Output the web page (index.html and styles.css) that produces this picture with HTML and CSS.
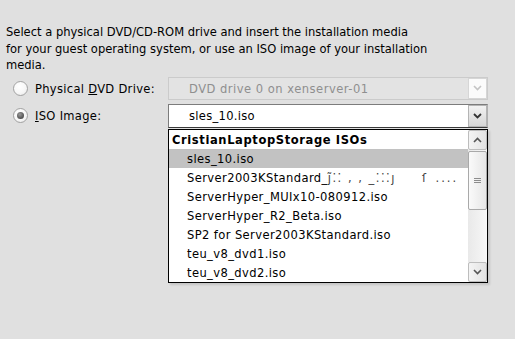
FILE: index.html
```html
<!DOCTYPE html>
<html>
<head>
<meta charset="utf-8">
<link rel="stylesheet" href="styles.css">
</head>
<body>
<div class="page">
  <p class="intro">Select a physical DVD/CD-ROM drive and insert the installation media<br>for your guest operating system, or use an ISO image of your installation<br>media.</p>
  <div class="choices">
    <label class="option">
      <span class="radio"></span>
      <span>Physical <u>D</u>VD Drive:</span>
    </label>
    <div class="combo disabled">
      <span class="combo-text">DVD drive 0 on xenserver-01</span>
      <span class="combo-btn">
        <svg width="9" height="6" viewBox="0 0 9 6"><polyline points="1,1 4.5,4.5 8,1" fill="none" stroke="#c4c4c4" stroke-width="1.6"/></svg>
      </span>
    </div>
    <label class="option">
      <span class="radio checked"></span>
      <span><u>I</u>SO Image:</span>
    </label>
    <div class="combo active">
      <span class="combo-text">sles_10.iso</span>
      <span class="combo-btn">
        <svg width="9" height="6" viewBox="0 0 9 6"><polyline points="1,1 4.5,4.5 8,1" fill="none" stroke="#333" stroke-width="1.8"/></svg>
      </span>
      <div class="droplist">
        <ul class="items">
          <li class="group">CristianLaptopStorage ISOs</li>
          <li class="selected">sles_10.iso</li>
          <li>Server2003KStandard_<span class="garble">ȷ̃⁚⁚ , , _⁚⁚⁚ȷ</span><span class="garble gap">ſ</span><span class="garble dots">....</span></li>
          <li>ServerHyper_MUIx10-080912.iso</li>
          <li>ServerHyper_R2_Beta.iso</li>
          <li>SP2 for Server2003KStandard.iso</li>
          <li>teu_v8_dvd1.iso</li>
          <li>teu_v8_dvd2.iso</li>
        </ul>
        <div class="scrollbar">
          <span class="sb-btn">
            <svg width="9" height="6" viewBox="0 0 9 6"><polyline points="1,5 4.5,1.5 8,5" fill="none" stroke="#555" stroke-width="1.6"/></svg>
          </span>
          <div class="sb-track">
            <span class="sb-thumb"><span class="grip"></span></span>
          </div>
          <span class="sb-btn">
            <svg width="9" height="6" viewBox="0 0 9 6"><polyline points="1,1 4.5,4.5 8,1" fill="none" stroke="#555" stroke-width="1.6"/></svg>
          </span>
        </div>
      </div>
    </div>
  </div>
</div>
</body>
</html>
```
FILE: styles.css
```css
html, body {
  margin: 0;
  padding: 0;
  background: #e0e0e0;
}
body {
  width: 515px;
  height: 339px;
  overflow: hidden;
  font-family: "DejaVu Sans Condensed", "DejaVu Sans", sans-serif;
  font-stretch: condensed;
  font-size: 12.8px;
  color: #000;
}
.page {
  padding: 24px 0 0 6px;
}
.intro {
  margin: 0;
  line-height: 16.5px;
}
.choices {
  display: grid;
  grid-template-columns: 162px 320px;
  row-gap: 4px;
  margin-top: 3px;
}
.option {
  display: flex;
  align-items: center;
  gap: 7px;
  padding-left: 7px;
  letter-spacing: 0.3px;
}
.radio {
  width: 13px;
  height: 13px;
  border: 1px solid #a2a2a2;
  border-radius: 50%;
  background: radial-gradient(circle at 40% 35%, #ffffff 0, #f7f7f7 55%, #e4e4e4 100%);
  display: flex;
  align-items: center;
  justify-content: center;
}
.radio.checked::after {
  content: "";
  width: 7px;
  height: 7px;
  border-radius: 50%;
  background: radial-gradient(circle at 40% 35%, #9a9a9a 0, #505050 70%, #3a3a3a 100%);
}
.combo {
  position: relative;
  height: 23px;
  box-sizing: border-box;
  display: flex;
  align-items: center;
}
.combo-text {
  flex: 1;
  padding-left: 20px;
  letter-spacing: 0.3px;
}
.combo.disabled {
  border: 1px solid #cbcbcb;
  background: #e3e3e3;
  color: #8f8f8f;
}
.combo.disabled .combo-text {
  letter-spacing: 0.5px;
}
.combo.active {
  height: 24px;
  border: 1px solid #7c7c7c;
  border-bottom-color: #3a3a3a;
  border-right-color: #b0b0b0;
  background: #fff;
}
.combo-btn {
  width: 19px;
  height: 21px;
  box-sizing: border-box;
  display: flex;
  align-items: center;
  justify-content: center;
}
.combo.disabled .combo-btn {
  background: #fbfbfb;
  border: 1px solid #d6d6d6;
}
.combo.active .combo-btn {
  height: 22px;
  background: linear-gradient(#f2f2f2, #d6d6d6);
  border: 1px solid #b4b4b4;
}
.droplist {
  position: absolute;
  left: -1px;
  top: 24px;
  width: 320px;
  height: 154px;
  box-sizing: border-box;
  border: 1px solid #000;
  background: #fff;
  display: flex;
  box-shadow: 2px 2px 2px rgba(0, 0, 0, 0.12);
  color: #000;
  letter-spacing: 0.4px;
}
.items {
  list-style: none;
  margin: 0;
  padding: 0;
  flex: 1;
  min-width: 0;
}
.items li {
  height: 19px;
  line-height: 19px;
  padding-left: 18px;
  white-space: nowrap;
  overflow: hidden;
}
.items li.group {
  font-weight: bold;
  font-stretch: normal;
  padding-left: 3px;
  letter-spacing: 0.6px;
}
.items li.selected {
  background: #c2c2c2;
}
.garble {
  color: #444;
  letter-spacing: 1.5px;
}
.garble.gap {
  margin-left: 26px;
}
.garble.dots {
  margin-left: 8px;
  letter-spacing: 2px;
}
.scrollbar {
  width: 19px;
  flex: none;
  display: flex;
  flex-direction: column;
  background: #f0f0f0;
  letter-spacing: 0;
}
.sb-btn {
  height: 20px;
  box-sizing: border-box;
  border: 1px solid #bdbdbd;
  border-radius: 2px;
  background: linear-gradient(90deg, #f4f4f4, #e2e2e2);
  display: flex;
  align-items: center;
  justify-content: center;
}
.sb-track {
  flex: 1;
  padding: 1px 0;
  background: linear-gradient(90deg, #e9e9e9, #f7f7f7);
}
.sb-thumb {
  display: flex;
  align-items: center;
  justify-content: center;
  height: 59px;
  box-sizing: border-box;
  border: 1px solid #a9a9a9;
  border-radius: 2px;
  background: linear-gradient(90deg, #fafafa, #e6e6e6);
}
.grip {
  width: 7px;
  height: 5px;
  background: repeating-linear-gradient(#8c8c8c 0, #8c8c8c 1px, transparent 1px, transparent 2px);
}
```
